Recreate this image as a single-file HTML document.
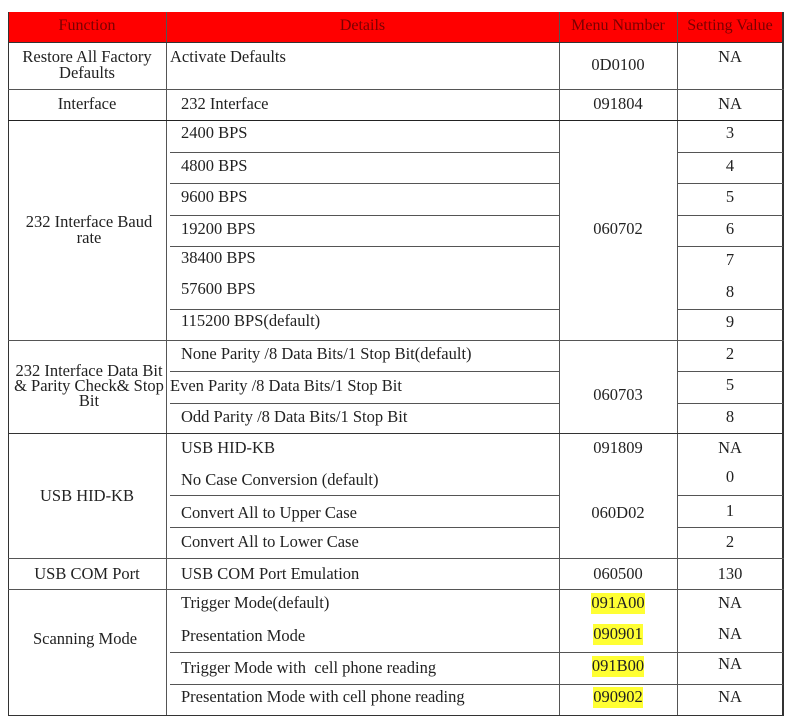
<!DOCTYPE html>
<html><head><meta charset="utf-8"><style>
body{margin:0;width:790px;height:717px;background:#fff;position:relative;overflow:hidden;font-family:"Liberation Serif",serif;font-size:16.5px;color:#222}
.h{position:absolute;background:#555;height:1px}
.v{position:absolute;background:#555;width:1px}
.t{position:absolute;line-height:16px;white-space:nowrap}
.c{text-align:center}
.hd{position:absolute;left:8px;top:12px;width:775px;height:30px;background:#ff0000}
.ht{color:#7a0000;font-size:16px}
.y{background:#ffff33;padding-bottom:2px}
</style></head><body>
<div class="hd"></div>
<div class="v" style="left:8px;top:12px;height:704px;background:#333"></div>
<div class="v" style="left:166px;top:12px;height:704px"></div>
<div class="v" style="left:559px;top:12px;height:704px"></div>
<div class="v" style="left:677px;top:12px;height:704px"></div>
<div class="v" style="left:782px;top:12px;height:704px;background:#333;width:2px"></div>
<div class="h" style="left:8px;top:42px;width:776px;background:#333"></div>
<div class="h" style="left:8px;top:89px;width:776px"></div>
<div class="h" style="left:8px;top:120px;width:776px;background:#222"></div>
<div class="h" style="left:8px;top:340px;width:776px"></div>
<div class="h" style="left:8px;top:433px;width:776px;background:#333"></div>
<div class="h" style="left:8px;top:558px;width:776px"></div>
<div class="h" style="left:8px;top:589px;width:776px"></div>
<div class="h" style="left:8px;top:715px;width:776px;background:#333"></div>
<div class="h" style="left:170px;top:152px;width:389px"></div><div class="h" style="left:677px;top:152px;width:106px"></div>
<div class="h" style="left:170px;top:183px;width:389px"></div><div class="h" style="left:677px;top:183px;width:106px"></div>
<div class="h" style="left:170px;top:215px;width:389px"></div><div class="h" style="left:677px;top:215px;width:106px"></div>
<div class="h" style="left:170px;top:246px;width:389px"></div><div class="h" style="left:677px;top:246px;width:106px"></div>
<div class="h" style="left:170px;top:309px;width:389px"></div><div class="h" style="left:677px;top:309px;width:106px"></div>
<div class="h" style="left:170px;top:371px;width:389px"></div><div class="h" style="left:677px;top:371px;width:106px"></div>
<div class="h" style="left:170px;top:403px;width:389px"></div><div class="h" style="left:677px;top:403px;width:106px"></div>
<div class="h" style="left:170px;top:495px;width:389px"></div><div class="h" style="left:677px;top:495px;width:106px"></div>
<div class="h" style="left:170px;top:527px;width:389px"></div><div class="h" style="left:677px;top:527px;width:106px"></div>
<div class="h" style="left:170px;top:652px;width:613px"></div>
<div class="h" style="left:170px;top:684px;width:613px"></div>
<div class="t c ht" style="left:8px;width:158px;top:18px">Function</div>
<div class="t c ht" style="left:166px;width:393px;top:18px">Details</div>
<div class="t c ht" style="left:559px;width:118px;top:18px">Menu Number</div>
<div class="t c ht" style="left:677px;width:106px;top:18px">Setting Value</div>
<div class="t c" style="left:8px;width:158px;top:49px">Restore All Factory<br>Defaults</div>
<div class="t c" style="left:8px;width:158px;top:96px">Interface</div>
<div class="t c" style="left:8px;width:162px;top:214px">232 Interface Baud<br>rate</div>
<div class="t c" style="left:8px;width:162px;top:363px;line-height:15px">232 Interface Data Bit<br>&amp; Parity Check&amp; Stop<br>Bit</div>
<div class="t c" style="left:8px;width:158px;top:488px">USB HID-KB</div>
<div class="t c" style="left:8px;width:158px;top:566px">USB COM Port</div>
<div class="t c" style="left:8px;width:154px;top:631px">Scanning Mode</div>
<div class="t" style="left:170px;top:49px">Activate Defaults</div>
<div class="t" style="left:181px;top:96px">232 Interface</div>
<div class="t" style="left:181px;top:125px">2400 BPS</div>
<div class="t" style="left:181px;top:158px">4800 BPS</div>
<div class="t" style="left:181px;top:189px">9600 BPS</div>
<div class="t" style="left:181px;top:221px">19200 BPS</div>
<div class="t" style="left:181px;top:250px">38400 BPS</div>
<div class="t" style="left:181px;top:281px">57600 BPS</div>
<div class="t" style="left:181px;top:313px">115200 BPS(default)</div>
<div class="t" style="left:181px;top:346px">None Parity /8 Data Bits/1 Stop Bit(default)</div>
<div class="t" style="left:170px;top:378px">Even Parity /8 Data Bits/1 Stop Bit</div>
<div class="t" style="left:181px;top:409px">Odd Parity /8 Data Bits/1 Stop Bit</div>
<div class="t" style="left:181px;top:440px">USB HID-KB</div>
<div class="t" style="left:181px;top:472px">No Case Conversion (default)</div>
<div class="t" style="left:181px;top:505px">Convert All to Upper Case</div>
<div class="t" style="left:181px;top:534px">Convert All to Lower Case</div>
<div class="t" style="left:181px;top:566px">USB COM Port Emulation</div>
<div class="t" style="left:181px;top:595px">Trigger Mode(default)</div>
<div class="t" style="left:181px;top:628px">Presentation Mode</div>
<div class="t" style="left:181px;top:660px">Trigger Mode with&nbsp; cell phone reading</div>
<div class="t" style="left:181px;top:689px">Presentation Mode with cell phone reading</div>
<div class="t c" style="left:559px;width:118px;top:57px">0D0100</div>
<div class="t c" style="left:559px;width:118px;top:96px">091804</div>
<div class="t c" style="left:559px;width:118px;top:221px">060702</div>
<div class="t c" style="left:559px;width:118px;top:387px">060703</div>
<div class="t c" style="left:559px;width:118px;top:440px">091809</div>
<div class="t c" style="left:559px;width:118px;top:505px">060D02</div>
<div class="t c" style="left:559px;width:118px;top:566px">060500</div>
<div class="t c" style="left:559px;width:118px;top:595px"><span class="y">091A00</span></div>
<div class="t c" style="left:559px;width:118px;top:626px"><span class="y">090901</span></div>
<div class="t c" style="left:559px;width:118px;top:658px"><span class="y">091B00</span></div>
<div class="t c" style="left:559px;width:118px;top:689px"><span class="y">090902</span></div>
<div class="t c" style="left:677px;width:106px;top:49px">NA</div>
<div class="t c" style="left:677px;width:106px;top:96px">NA</div>
<div class="t c" style="left:677px;width:106px;top:125px">3</div>
<div class="t c" style="left:677px;width:106px;top:158px">4</div>
<div class="t c" style="left:677px;width:106px;top:189px">5</div>
<div class="t c" style="left:677px;width:106px;top:221px">6</div>
<div class="t c" style="left:677px;width:106px;top:252px">7</div>
<div class="t c" style="left:677px;width:106px;top:284px">8</div>
<div class="t c" style="left:677px;width:106px;top:314px">9</div>
<div class="t c" style="left:677px;width:106px;top:346px">2</div>
<div class="t c" style="left:677px;width:106px;top:377px">5</div>
<div class="t c" style="left:677px;width:106px;top:409px">8</div>
<div class="t c" style="left:677px;width:106px;top:440px">NA</div>
<div class="t c" style="left:677px;width:106px;top:469px">0</div>
<div class="t c" style="left:677px;width:106px;top:503px">1</div>
<div class="t c" style="left:677px;width:106px;top:534px">2</div>
<div class="t c" style="left:677px;width:106px;top:566px">130</div>
<div class="t c" style="left:677px;width:106px;top:595px">NA</div>
<div class="t c" style="left:677px;width:106px;top:626px">NA</div>
<div class="t c" style="left:677px;width:106px;top:656px">NA</div>
<div class="t c" style="left:677px;width:106px;top:689px">NA</div>
</body></html>
